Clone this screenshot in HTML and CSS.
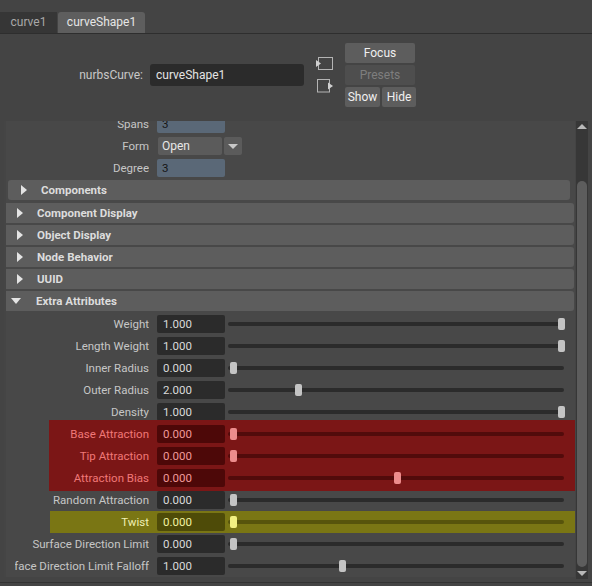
FILE: index.html
```html
<!DOCTYPE html>
<html lang="en">
<head>
  <meta charset="UTF-8">
  <title>Attribute Editor - curveShape1</title>
  <link rel="stylesheet" href="styles.css">
</head>
<body>
  <!-- Node tabs -->
  <div class="tabs">
    <div class="tab">curve1</div>
    <div class="tab active">curveShape1</div>
  </div>

  <!-- Node name + buttons -->
  <div class="node-header">
    <div class="node-name">
      <span class="node-label">nurbsCurve:</span>
      <div class="node-field">curveShape1</div>
    </div>
    <div class="node-icons">
      <svg width="18" height="13" viewBox="0 0 18 13">
        <rect x="2.5" y="0.5" width="14" height="12" fill="none" stroke="#b4b4b4"/>
        <path d="M0 3 L5 6.5 L0 10 Z" fill="#d0d0d0"/>
      </svg>
      <svg width="18" height="14" viewBox="0 0 18 14">
        <rect x="1.5" y="0.5" width="12" height="12.5" fill="none" stroke="#b4b4b4"/>
        <path d="M12 3.5 L17 7 L12 10.5 Z" fill="#d0d0d0"/>
      </svg>
    </div>
    <div class="node-buttons">
      <button class="btn btn-wide">Focus</button>
      <button class="btn btn-wide" disabled>Presets</button>
      <div class="btn-pair">
        <button class="btn">Show</button>
        <button class="btn">Hide</button>
      </div>
    </div>
  </div>

  <!-- Scrolling attribute list -->
  <div class="editor">
    <div class="scroll-view">
      <div class="scroll-content">
        <div class="attr-row">
          <div class="attr-label">Spans</div>
          <div class="num-field locked">3</div>
        </div>
        <div class="attr-row">
          <div class="attr-label">Form</div>
          <div class="dropdown">Open</div>
          <div class="dropdown-arrow"></div>
        </div>
        <div class="attr-row">
          <div class="attr-label">Degree</div>
          <div class="num-field locked">3</div>
        </div>

        <div class="frame-header nested"><span class="arrow"></span>Components</div>
        <div class="frame-header"><span class="arrow"></span>Component Display</div>
        <div class="frame-header"><span class="arrow"></span>Object Display</div>
        <div class="frame-header"><span class="arrow"></span>Node Behavior</div>
        <div class="frame-header"><span class="arrow"></span>UUID</div>
        <div class="frame-header open"><span class="arrow"></span>Extra Attributes</div>

        <div class="attr-row">
          <div class="attr-label">Weight</div>
          <div class="num-field">1.000</div>
          <div class="slider"><span class="handle" style="left: 330px"></span></div>
        </div>
        <div class="attr-row">
          <div class="attr-label">Length Weight</div>
          <div class="num-field">1.000</div>
          <div class="slider"><span class="handle" style="left: 330px"></span></div>
        </div>
        <div class="attr-row">
          <div class="attr-label">Inner Radius</div>
          <div class="num-field">0.000</div>
          <div class="slider"><span class="handle" style="left: 2px"></span></div>
        </div>
        <div class="attr-row">
          <div class="attr-label">Outer Radius</div>
          <div class="num-field">2.000</div>
          <div class="slider"><span class="handle" style="left: 67px"></span></div>
        </div>
        <div class="attr-row">
          <div class="attr-label">Density</div>
          <div class="num-field">1.000</div>
          <div class="slider"><span class="handle" style="left: 330px"></span></div>
        </div>

        <div class="highlight red">
          <div class="attr-row">
            <div class="attr-label">Base Attraction</div>
            <div class="num-field">0.000</div>
            <div class="slider"><span class="handle" style="left: 2px"></span></div>
          </div>
          <div class="attr-row">
            <div class="attr-label">Tip Attraction</div>
            <div class="num-field">0.000</div>
            <div class="slider"><span class="handle" style="left: 2px"></span></div>
          </div>
          <div class="attr-row">
            <div class="attr-label">Attraction Bias</div>
            <div class="num-field">0.000</div>
            <div class="slider"><span class="handle" style="left: 166px"></span></div>
          </div>
        </div>

        <div class="attr-row">
          <div class="attr-label">Random Attraction</div>
          <div class="num-field">0.000</div>
          <div class="slider"><span class="handle" style="left: 2px"></span></div>
        </div>

        <div class="highlight yellow">
          <div class="attr-row">
            <div class="attr-label">Twist</div>
            <div class="num-field">0.000</div>
            <div class="slider"><span class="handle" style="left: 2px"></span></div>
          </div>
        </div>

        <div class="attr-row">
          <div class="attr-label">Surface Direction Limit</div>
          <div class="num-field">0.000</div>
          <div class="slider"><span class="handle" style="left: 2px"></span></div>
        </div>
        <div class="attr-row">
          <div class="attr-label">Surface Direction Limit Falloff</div>
          <div class="num-field">1.000</div>
          <div class="slider"><span class="handle" style="left: 111px"></span></div>
        </div>
      </div>
    </div>

    <div class="scrollbar">
      <div class="scroll-up"></div>
      <div class="scroll-thumb"></div>
      <div class="scroll-down"></div>
    </div>
  </div>
  <div class="footer"></div>
</body>
</html>
```

FILE: styles.css
```css
body {
  margin: 0;
  width: 592px;
  height: 586px;
  overflow: hidden;
  background-color: #444444;
  font-family: Roboto, "Liberation Sans", sans-serif;
  font-size: 11.5px;
  color: #c6c6c6;
}

/* ---- tabs ---- */
.tabs {
  display: flex;
  align-items: flex-end;
  height: 33px;
  border-bottom: 1px solid #2e2e2e;
}

.tab {
  width: 57px;
  height: 21px;
  line-height: 21px;
  text-align: center;
  font-size: 12px;
  background-color: #363636;
  color: #a8a8a8;
}

.tab.active {
  width: 87px;
  margin-left: 1px;
  background-color: #5e5e5e;
  color: #e6e6e6;
  border-radius: 3px 3px 0 0;
}

/* ---- node header ---- */
.node-header {
  display: flex;
  align-items: flex-start;
  height: 87px;
  box-sizing: border-box;
  padding-top: 9px;
}

.node-name {
  display: flex;
  align-items: center;
  margin-top: 21px;
}

.node-label {
  width: 150px;
  text-align: right;
  padding-right: 7px;
  box-sizing: border-box;
  font-size: 12px;
  color: #c8c8c8;
}

.node-field {
  width: 154px;
  height: 22px;
  line-height: 22px;
  padding-left: 6px;
  box-sizing: border-box;
  background-color: #2b2b2b;
  border-radius: 3px;
  font-size: 12px;
  color: #e4e4e4;
}

.node-icons {
  display: flex;
  flex-direction: column;
  gap: 9px;
  margin: 14px 0 0 12px;
  width: 29px;
}

.node-buttons {
  display: flex;
  flex-direction: column;
  gap: 2px;
}

.btn {
  height: 20px;
  padding: 0;
  border: none;
  border-radius: 2px;
  background-color: #5d5d5d;
  color: #f0f0f0;
  font-family: inherit;
  font-size: 12px;
  width: 35px;
}

.btn-wide {
  width: 70px;
}

.btn:disabled {
  background-color: #4e4e4e;
  color: #7e7e7e;
}

.btn-pair {
  display: flex;
  gap: 2px;
}

.btn-pair .btn + .btn {
  width: 34px;
}

/* ---- editor / scroll area ---- */
.editor {
  display: flex;
  gap: 1px;
  height: 458px;
  margin: 0 4px 0 4px;
}

.scroll-view {
  flex: 1;
  height: 456px;
  overflow: hidden;
  background-color: #484848;
  border-left: 2px solid #454545;
}

.scroll-content {
  margin-top: -8px;
  margin-left: -2px;
}

.attr-row {
  display: flex;
  align-items: center;
  height: 22px;
}

.attr-label {
  display: flex;
  justify-content: flex-end;
  flex: none;
  width: 134px;
  margin-left: 11px;
  overflow: hidden;
  white-space: nowrap;
}

.num-field {
  flex: none;
  width: 68px;
  height: 18px;
  line-height: 18px;
  margin-left: 8px;
  padding-left: 6px;
  box-sizing: border-box;
  background-color: #2b2b2b;
  border-radius: 2px;
  color: #dadada;
}

.num-field.locked {
  background-color: #5a6877;
  color: #151515;
  padding-left: 5px;
}

.dropdown {
  width: 64px;
  height: 18px;
  line-height: 18px;
  margin-left: 9px;
  padding-left: 4px;
  box-sizing: border-box;
  background-color: #5b5b5b;
  border-radius: 2px;
  color: #e8e8e8;
  font-size: 12px;
}

.dropdown-arrow {
  position: relative;
  width: 18px;
  height: 18px;
  margin-left: 2px;
  background-color: #5b5b5b;
  border-radius: 2px;
}

.dropdown-arrow::after {
  content: "";
  position: absolute;
  left: 4px;
  top: 7px;
  border-left: 5px solid transparent;
  border-right: 5px solid transparent;
  border-top: 5px solid #c8c8c8;
}

/* ---- frame headers ---- */
.frame-header {
  display: flex;
  align-items: center;
  height: 20px;
  margin: 0 1px 2px 0;
  background-color: #5d5d5d;
  border-radius: 3px;
  font-weight: bold;
  color: #dcdcdc;
}

.frame-header.nested {
  margin: 1px 5px 3px 4px;
}

.arrow {
  width: 0;
  height: 0;
  margin: 0 14px 0 13px;
  border-top: 5px solid transparent;
  border-bottom: 5px solid transparent;
  border-left: 6px solid #e4e4e4;
}

.frame-header.open .arrow {
  margin: 0 15px 0 7px;
  border-left: 5px solid transparent;
  border-right: 5px solid transparent;
  border-top: 6px solid #e4e4e4;
  border-bottom: 0;
}

/* ---- sliders ---- */
.slider {
  position: relative;
  flex: none;
  width: 336px;
  height: 4px;
  margin-left: 3px;
  background-color: #2b2b2b;
  border-radius: 2px;
}

.handle {
  position: absolute;
  top: -4px;
  width: 7px;
  height: 12px;
  background-color: #c4c4c4;
  border-radius: 2px;
}

/* ---- highlighted groups ---- */
.highlight {
  position: relative;
  margin-right: -6px;
}

.highlight .attr-label {
  width: 100px;
  margin-left: 0;
}

.highlight.red {
  margin-left: 45px;
  margin-top: -3px;
  margin-bottom: -2px;
  padding: 3px 0 2px;
  background-color: #7b1616;
}

.red .attr-label {
  color: #f07878;
}

.red .num-field {
  background-color: #4d0808;
  color: #f09a9a;
}

.red .slider {
  background-color: #520b0b;
}

.red .handle {
  background-color: #ec8c8c;
}

.highlight.yellow {
  margin-left: 46px;
  margin-right: -3px;
  background-color: #7a7614;
}

.yellow .attr-label {
  width: 99px;
  color: #f0f0b4;
}

.yellow .num-field {
  background-color: #4e4b08;
  color: #f2f2a2;
}

.yellow .slider {
  background-color: #57540c;
}

.yellow .handle {
  background-color: #f2f082;
}

/* ---- scrollbar ---- */
.scrollbar {
  display: flex;
  flex-direction: column;
  align-items: center;
  width: 12px;
  height: 458px;
  background-color: #373737;
}

.scroll-up {
  margin-top: 3px;
  border-left: 5px solid transparent;
  border-right: 5px solid transparent;
  border-bottom: 5px solid #b8b8b8;
}

.scroll-thumb {
  width: 10px;
  height: 386px;
  margin-top: 52px;
  background-color: #5d5d5d;
  border-radius: 5px;
}

.scroll-down {
  margin-top: 4px;
  border-left: 5px solid transparent;
  border-right: 5px solid transparent;
  border-top: 5px solid #b8b8b8;
}

.footer {
  height: 3px;
  border-bottom: 1px solid #333333;
}
```
